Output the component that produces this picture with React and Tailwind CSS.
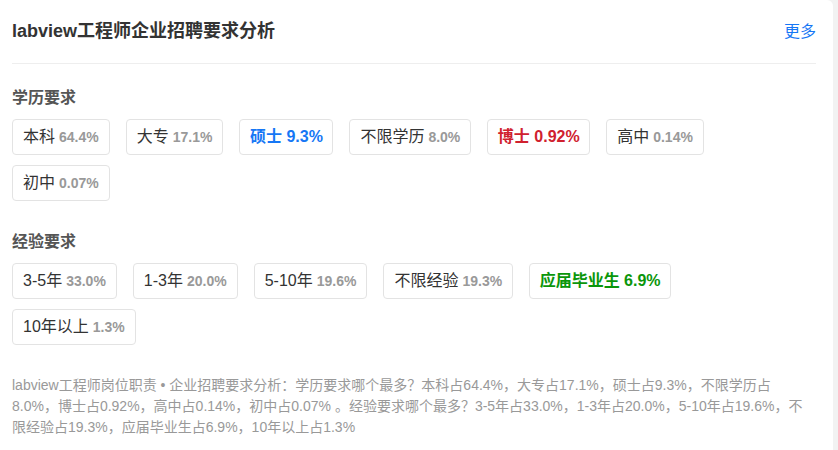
const eduTags = [
  { label: '本科', pct: '64.4%' },
  { label: '大专', pct: '17.1%' },
  { label: '硕士', pct: '9.3%', tone: 'blue' },
  { label: '不限学历', pct: '8.0%' },
  { label: '博士', pct: '0.92%', tone: 'red' },
  { label: '高中', pct: '0.14%' },
  { label: '初中', pct: '0.07%' },
];

const expTags = [
  { label: '3-5年', pct: '33.0%' },
  { label: '1-3年', pct: '20.0%' },
  { label: '5-10年', pct: '19.6%' },
  { label: '不限经验', pct: '19.3%' },
  { label: '应届毕业生', pct: '6.9%', tone: 'green' },
  { label: '10年以上', pct: '1.3%' },
];

const toneClass = {
  blue: 'text-[#1677f5] font-bold',
  red: 'text-[#d0212e] font-bold',
  green: 'text-[#0a960a] font-bold',
};

function Tag({ label, pct, tone }) {
  if (tone) {
    return (
      <span className={`inline-flex items-center h-9 mr-4 px-[9.5px] border border-[#e3e3e3] rounded text-[16px] ${toneClass[tone]}`}>
        {label} {pct}
      </span>
    );
  }
  return (
    <span className="inline-flex items-center h-9 mr-4 px-[10px] border border-[#e3e3e3] rounded text-[16px] text-[#333]">
      {label}
      <span className="ml-[4px] text-[14px] font-bold text-[#999]">{pct}</span>
    </span>
  );
}

function Section({ title, tags, className }) {
  return (
    <div className={className}>
      <h3 className="text-[16px] leading-5 font-bold text-[#555]">{title}</h3>
      <div className="flex flex-wrap gap-y-[10px] mt-[11px]">
        {tags.map((t) => (
          <Tag key={t.label} {...t} />
        ))}
      </div>
    </div>
  );
}

export default function App() {
  return (
    <div
      className="w-[838px] h-[450px] bg-[#f2f2f2] overflow-hidden"
      style={{ fontFamily: '"Liberation Sans", Arial, "Noto Sans CJK SC", sans-serif' }}
    >
      <div className="w-[833px] h-full bg-white rounded-tr-md pl-3 pr-[17px]">
        {/* Header */}
        <div className="h-16 flex items-center justify-between border-b border-[#eeeeee]">
          <h2 className="text-[18px] font-bold text-[#333]">labview工程师企业招聘要求分析</h2>
          <a className="text-[16px] text-[#1677f5] cursor-pointer">更多</a>
        </div>

        <Section title="学历要求" tags={eduTags} className="mt-6" />
        <Section title="经验要求" tags={expTags} className="mt-[31px]" />

        {/* Summary */}
        <p className="mt-[30px] text-[14px] leading-[21px] text-[#999]">
          labview工程师岗位职责 • 企业招聘要求分析：学历要求哪个最多？本科占64.4%，大专占17.1%，硕士占9.3%，不限学历占8.0%，博士占0.92%，高中占0.14%，初中占0.07% 。经验要求哪个最多？3-5年占33.0%，1-3年占20.0%，5-10年占19.6%，不限经验占19.3%，应届毕业生占6.9%，10年以上占1.3%
        </p>
      </div>
    </div>
  );
}
